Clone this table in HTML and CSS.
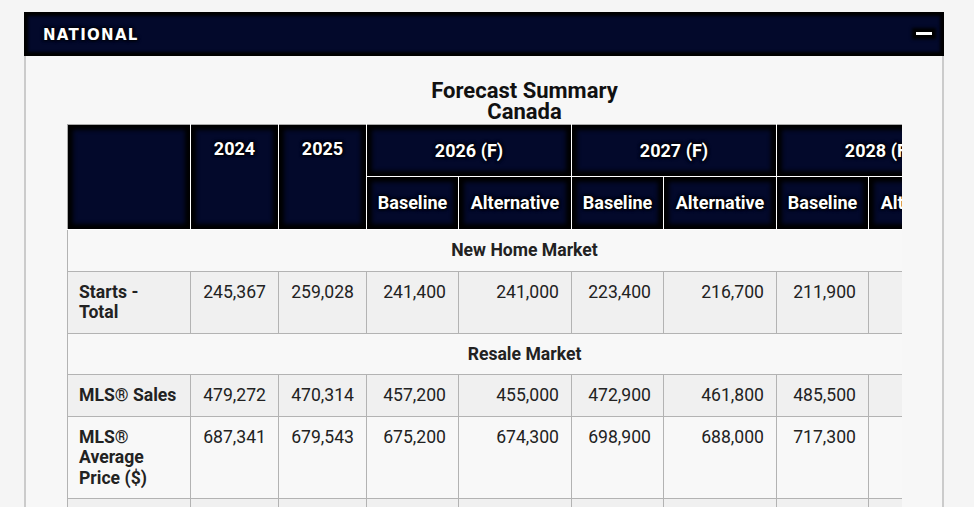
FILE: index.html
```html
<!DOCTYPE html>
<html lang="en">
<head>
<meta charset="utf-8">
<title>National Forecast Summary</title>
<link rel="stylesheet" href="styles.css">
</head>
<body>
<div class="panel">
  <div class="panel-head">
    <span class="panel-title">NATIONAL</span>
    <span class="minus" aria-label="Collapse"></span>
  </div>
  <div class="panel-body">
    <div class="scroll">
      <table class="forecast">
        <caption>Forecast Summary<br>Canada</caption>
        <colgroup>
          <col class="c-label">
          <col class="c-year"><col class="c-year">
          <col class="c-base"><col class="c-alt">
          <col class="c-base"><col class="c-alt">
          <col class="c-base"><col class="c-alt">
        </colgroup>
        <thead>
          <tr class="hr1">
            <th rowspan="2" class="first"></th>
            <th rowspan="2" class="yr">2024</th>
            <th rowspan="2" class="yr">2025</th>
            <th colspan="2">2026 (F)</th>
            <th colspan="2">2027 (F)</th>
            <th colspan="2">2028 (F)</th>
          </tr>
          <tr class="hr2">
            <th>Baseline</th><th>Alternative</th>
            <th>Baseline</th><th>Alternative</th>
            <th>Baseline</th><th>Alternative</th>
          </tr>
        </thead>
        <tbody>
          <tr>
            <td colspan="9" class="section">New Home Market</td>
          </tr>
          <tr>
            <td class="label">Starts - Total</td>
            <td>245,367</td><td>259,028</td>
            <td>241,400</td><td>241,000</td>
            <td>223,400</td><td>216,700</td>
            <td>211,900</td><td></td>
          </tr>
          <tr>
            <td colspan="9" class="section">Resale Market</td>
          </tr>
          <tr>
            <td class="label">MLS® Sales</td>
            <td>479,272</td><td>470,314</td>
            <td>457,200</td><td>455,000</td>
            <td>472,900</td><td>461,800</td>
            <td>485,500</td><td></td>
          </tr>
          <tr>
            <td class="label">MLS® Average Price ($)</td>
            <td>687,341</td><td>679,543</td>
            <td>675,200</td><td>674,300</td>
            <td>698,900</td><td>688,000</td>
            <td>717,300</td><td></td>
          </tr>
          <tr>
            <td class="label">&nbsp;</td>
            <td></td><td></td><td></td><td></td>
            <td></td><td></td><td></td><td></td>
          </tr>
        </tbody>
      </table>
    </div>
  </div>
</div>
</body>
</html>
```

FILE: styles.css
```css
html, body {
  margin: 0;
  background: #f5f5f5;
}

body {
  padding: 12px 30px 0 24px;
  font-family: Roboto, "Liberation Sans", Arial, sans-serif;
  overflow: hidden;
}

.panel {
  width: 920px;
}

.panel-head {
  box-sizing: border-box;
  height: 44px;
  display: flex;
  align-items: center;
  justify-content: space-between;
  padding: 1px 12px 0 19px;
  background: #03092b;
  box-shadow: inset 0 0 3px 4px #000;
}

.panel-title {
  color: #fff;
  font-family: "DejaVu Sans", "Open Sans", sans-serif;
  font-weight: bold;
  font-size: 15px;
  letter-spacing: 1.3px;
  text-shadow: 0 0 3px #000, 0 0 3px #000, 0 0 4px #000;
}

.minus {
  display: block;
  width: 16px;
  height: 3px;
  margin-top: -3px;
  background: #fff;
  box-shadow: 0 0 3px 4px #000;
}

.panel-body {
  border-left: 2px solid #cbcbcb;
  border-right: 2px solid #cbcbcb;
  background: #f7f7f7;
  padding: 24px 40px 0 41px;
  min-height: 460px;
}

.scroll {
  overflow: hidden;
}

.forecast {
  border-collapse: collapse;
  table-layout: fixed;
  width: 914px;
  font-size: 17.6px;
  line-height: 20.5px;
  color: #222;
}

.forecast caption {
  font-size: 22px;
  line-height: 21px;
  font-weight: bold;
  color: #111;
  padding-bottom: 2px;
}

.c-label { width: 123px; }
.c-year { width: 88px; }
.c-base { width: 92px; }
.c-alt { width: 113px; }

.forecast th {
  background: #03092b;
  color: #fff;
  border: 1px solid #fff;
  font-size: 18px;
  line-height: 21px;
  font-weight: bold;
  text-align: center;
  box-shadow: inset 0 0 4px 5px #000;
  text-shadow: 0 0 3px #000, 0 0 3px #000, 0 0 4px #000;
}

.forecast .hr1 th {
  border-top-color: #aaa;
  padding: 15px 6px;
}

.forecast .hr1 th.first {
  border-left-color: #aaa;
}

.forecast .hr1 th.yr,
.forecast .hr1 th.first {
  vertical-align: top;
  padding-top: 13px;
}

.forecast .hr2 th {
  padding: 15px 6px 16px;
}

.forecast td {
  border: 1px solid #b3b3b3;
  padding: 10px 12px;
  text-align: right;
  vertical-align: top;
  background: #f8f8f8;
}

.forecast tbody tr:nth-child(even) td {
  background: #f0f0f0;
}

.forecast td.label {
  text-align: left;
  font-weight: bold;
  padding-left: 11px;
  padding-right: 12px;
}

.forecast td.section {
  text-align: center;
  font-weight: bold;
}
```
